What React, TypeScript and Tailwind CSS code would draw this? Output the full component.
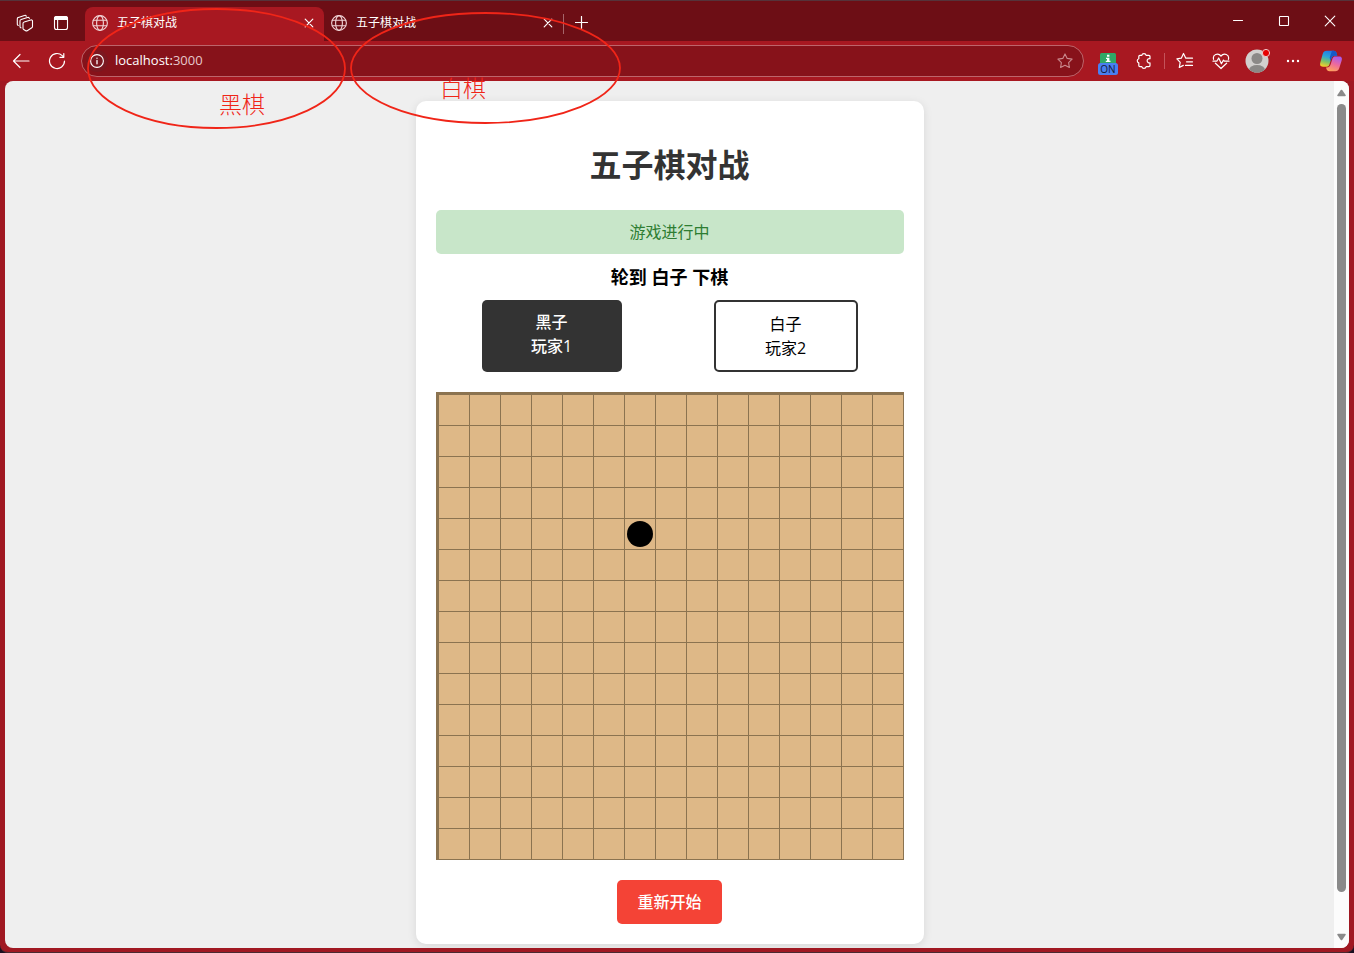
import React, { useState } from 'react';

type Stone = 'black' | 'white' | null;

const SIZE = 15;

const initialBoard = (): Stone[] => {
  const cells: Stone[] = Array(SIZE * SIZE).fill(null);
  cells[4 * SIZE + 6] = 'black';
  return cells;
};

const line = {
  fill: 'none',
  stroke: 'currentColor',
  strokeLinecap: 'round' as const,
  strokeLinejoin: 'round' as const,
};

function GlobeIcon() {
  return (
    <svg width="16" height="16" viewBox="0 0 16 16" className="shrink-0 text-[#f0d4d6]" {...line} strokeWidth="1.1">
      <circle cx="8" cy="8" r="7.4" />
      <ellipse cx="8" cy="8" rx="3.4" ry="7.4" />
      <path d="M1.3 5.3h13.4M1.3 10.7h13.4" />
    </svg>
  );
}

function CloseIcon() {
  return (
    <svg width="10" height="10" viewBox="0 0 10 10" {...line} strokeWidth="1.2">
      <path d="M1.2 1.2l7.6 7.6M8.8 1.2L1.2 8.8" />
    </svg>
  );
}

function WorkspacesIcon() {
  return (
    <svg width="18" height="18" viewBox="0 0 18 18" {...line} strokeWidth="1.1">
      <path d="M8.2 8l6.6-2c1.1-.3 1.700.2 1.700 1.100v5.300c0 .6-.2 1-.7 1.300l-4.600 3c-.5.3-1 .3-1.500 0l-2-1.200c-.5-.3-.7-.7-.7-1.300V9.400c0-.7.4-1.200 1.200-1.400z" />
      <path d="M4.900 13.800l-.5-.4c-.3-.2-.4-.5-.4-1V6.900c0-.7.4-1.200 1.100-1.400l6.400-2c.9-.3 1.600 0 1.800.9" />
      <path d="M2.200 11.500l-.5-.4c-.3-.2-.4-.5-.4-1V4.800c0-.7.4-1.200 1.100-1.400l6-2c.9-.3 1.600 0 1.900.8" />
    </svg>
  );
}

function TabActionsIcon() {
  return (
    <svg width="16" height="16" viewBox="0 0 16 16" {...line} strokeWidth="1.1">
      <rect x="1.5" y="1.5" width="13" height="13" rx="2" />
      <path d="M1.5 3.5c0-1.200.8-2 2-2h9c1.200 0 2 .8 2 2v1h-13z" fill="currentColor" />
      <path d="M4.6 5v9.5" />
    </svg>
  );
}

function BackIcon() {
  return (
    <svg width="18" height="18" viewBox="0 0 18 18" {...line} strokeWidth="1.2">
      <path d="M8 2.5L1.5 9 8 15.5M1.5 9h15.5" />
    </svg>
  );
}

function ReloadIcon() {
  return (
    <svg width="18" height="18" viewBox="0 0 18 18" {...line} strokeWidth="1.2">
      <path d="M16.5 9a7.5 7.5 0 1 1-2.3-5.4L15.8 5.2M15.8 1.5v3.8h-3.9" />
    </svg>
  );
}

function StarIcon() {
  return (
    <svg width="16" height="16" viewBox="0 0 16 16" className="text-[#c9898d]" {...line} strokeWidth="1.1">
      <path d="M8 .9l2.2 4.5 4.900.7-3.500 3.500.8 4.900L8 12.200l-4.400 2.300.8-4.900L.9 6.100l4.900-.7z" />
    </svg>
  );
}

function ExtensionIcon() {
  return (
    <svg width="22" height="28" viewBox="0 0 22 28" fill="none">
      <rect x="3" y="6" width="16" height="12" rx="1.5" fill="#2fa866" />
      <path d="M10 7.700h2.400v2H10zM9 10.700h3.400v3H13.500v1.300H8.800v-1.300H10v-1.700H9z" fill="#fff" />
      <rect x="1" y="16" width="20" height="12" rx="2.5" fill="#4a7ff0" />
      <text x="11" y="25.500" textAnchor="middle" fontSize="10" fill="#10183a" fontFamily="Open Sans, sans-serif">ON</text>
    </svg>
  );
}

function PuzzleIcon() {
  return (
    <svg width="18" height="18" viewBox="0 0 18 18" {...line} strokeWidth="1.2">
      <path d="M4.800 3.400h2a2.200 2.200 0 0 1 4.300 0h2.900c.6 0 1 .4 1 1v2.300a2.200 2.200 0 1 0 0 4.200v2.700c0 .6-.4 1-1 1h-2.900a2.200 2.200 0 0 1-4.300 0h-2c-.6 0-1-.4-1-1v-2.700a2.200 2.200 0 0 1 0-4.200V4.400c0-.6.4-1 1-1z" />
    </svg>
  );
}

function FavoritesIcon() {
  return (
    <svg width="18" height="18" viewBox="0 0 18 18" {...line} strokeWidth="1.2">
      <path d="M9.800 6.200L7.500 1.500 5.300 6.200.9 6.800l3.300 3.500-.9 5.200 4-2.100M9.800 6.200h6.700M10.500 9.800h6M9.500 13.400h7" />
    </svg>
  );
}

function HeartIcon() {
  return (
    <svg width="18" height="18" viewBox="0 0 18 18" {...line} strokeWidth="1.2">
      <path d="M1.600 7.300C.3 2.600 6 .4 9 4c3-3.600 8.700-1.400 7.400 3.300M3.400 11.200L9 16.500l5.600-5.300" />
      <path d="M1 9.200h3.800l1.900-3.200 2.700 5.800 2.100-3.700.9 1.100H17" />
    </svg>
  );
}

function AvatarIcon() {
  return (
    <svg width="26" height="26" viewBox="0 0 26 26">
      <defs>
        <clipPath id="face">
          <circle cx="13" cy="13" r="11.5" />
        </clipPath>
      </defs>
      <circle cx="13" cy="13" r="11.5" fill="#d2d0ce" />
      <g clipPath="url(#face)" fill="#8b8987">
        <circle cx="13" cy="10.5" r="5.5" />
        <ellipse cx="13" cy="22" rx="8" ry="5" />
      </g>
      <circle cx="22" cy="5" r="3.6" fill="#e60000" stroke="#f0c8ca" strokeWidth="1" />
    </svg>
  );
}

function CopilotIcon() {
  return (
    <svg width="24" height="24" viewBox="0 0 24 24">
      <defs>
        <linearGradient id="cpLeft" x1=".6" y1="0" x2=".3" y2="1">
          <stop offset="0" stopColor="#2178e6" />
          <stop offset=".4" stopColor="#2da6d8" />
          <stop offset=".7" stopColor="#7fc265" />
          <stop offset="1" stopColor="#f2cf2c" />
        </linearGradient>
        <linearGradient id="cpRight" x1=".7" y1="0" x2=".3" y2="1">
          <stop offset="0" stopColor="#a65af0" />
          <stop offset=".5" stopColor="#ee6a9c" />
          <stop offset="1" stopColor="#ffa45c" />
        </linearGradient>
      </defs>
      <path d="M7.800 1.800h7c1.600 0 2.300.9 2.700 2.300l.8 2.600h-2.500c-1.900 0-2.900.9-3.400 2.600l-2 6.200c-.5 1.500-1.400 2.200-2.900 2.200H3.900c-2.700 0-3.300-1.800-2.500-4.400l2.300-8.200c.6-2.200 1.900-3.300 4.100-3.300z" fill="url(#cpLeft)" />
      <path d="M13 1.800h1.800c1.600 0 2.300.9 2.700 2.300l.8 2.600h-2.500c-1.900 0-2.900.9-3.400 2.600l-.9 2.900-.8-3.600z" fill="#1758c7" />
      <path d="M16.200 22.200H10.500c-1.900 0-2.600-.9-3.100-2.500l-.4-1.200c2.500.2 3.900-.8 4.600-3l1.900-5.900c.5-1.500 1.400-2.100 2.900-2.100h3.700c2.700 0 3.300 1.700 2.500 4.300l-2.300 7.100c-.7 2.200-1.900 3.300-4.100 3.300z" fill="url(#cpRight)" />
    </svg>
  );
}

function Tab({ title, active }: { title: string; active?: boolean }) {
  return (
    <div className={`flex w-[239px] items-center self-stretch rounded-t-lg pb-0.5 pl-[7px] pr-2.5 ${active ? 'bg-[#a81821]' : ''}`}>
      <GlobeIcon />
      <a href="#" className="ml-[9px] flex-1 text-xs text-white">{title}</a>
      <button aria-label="关闭标签页">
        <CloseIcon />
      </button>
    </div>
  );
}

function ToolButton({ label, children }: { label: string; children: React.ReactNode }) {
  return (
    <button aria-label={label} className="flex h-8 w-9 shrink-0 items-center justify-center">
      {children}
    </button>
  );
}

function WindowButton({ label, d }: { label: string; d: string }) {
  return (
    <button aria-label={label} className="flex h-10 w-[46px] items-center justify-center">
      <svg width="12" height="12" viewBox="0 0 12 12" {...line} strokeWidth="1.1">
        <path d={d} />
      </svg>
    </button>
  );
}

function TitleBar() {
  return (
    <header className="flex h-[41px] items-center border-t border-[#55333a] bg-[#6d0e15] pl-[7px] pr-px pt-1.5">
      <div className="flex items-center pb-0.5">
        <ToolButton label="工作区"><WorkspacesIcon /></ToolButton>
        <ToolButton label="标签操作"><TabActionsIcon /></ToolButton>
      </div>
      <nav className="ml-1.5 flex items-center self-stretch">
        <Tab title="五子棋对战" active />
        <Tab title="五子棋对战" />
      </nav>
      <div className="h-5 w-px bg-[#a5656a]" />
      <div className="pb-0.5">
        <ToolButton label="新建标签页">
          <svg width="14" height="14" viewBox="0 0 14 14" {...line} strokeWidth="1.2">
            <path d="M6.5 .5v12M.5 6.5h12" />
          </svg>
        </ToolButton>
      </div>
      <div className="mb-1.5 ml-auto flex">
        <WindowButton label="最小化" d="M1.5 5.5h9" />
        <WindowButton label="最大化" d="M2 1.500h8q.5 0 .5.500v8q0 .5-.5.500H2q-.5 0-.5-.5V2q0-.5.500-.5z" />
        <WindowButton label="关闭" d="M1.2 1.2l9.6 9.6M10.8 1.2l-9.6 9.6" />
      </div>
    </header>
  );
}

function AddressBar() {
  return (
    <div className="flex h-10 items-center bg-[#a81821] pl-[3px] pr-[5px]">
      <ToolButton label="返回"><BackIcon /></ToolButton>
      <ToolButton label="刷新"><ReloadIcon /></ToolButton>
      <div className="mx-1.5 flex h-8 flex-1 items-center rounded-full border border-[#bd656b] bg-[#87121a] pl-1 pr-2.5">
        <button aria-label="查看站点信息" className="flex size-[22px] items-center justify-center rounded-full bg-[#7b1820]">
          <svg width="14" height="14" viewBox="0 0 14 14" {...line} strokeWidth="1.1">
            <circle cx="7" cy="7" r="6.4" />
            <path d="M7 6.5v3.3M7 4.2v.1" strokeWidth="1.3" />
          </svg>
        </button>
        <a href="#" className="ml-[7px] flex-1 text-[13px] text-white">
          localhost:<span className="text-[#e6c8ca]">3000</span>
        </a>
        <button aria-label="收藏此页"><StarIcon /></button>
      </div>
      <ToolButton label="扩展"><ExtensionIcon /></ToolButton>
      <ToolButton label="扩展管理"><PuzzleIcon /></ToolButton>
      <div className="mx-0.5 h-4 w-px bg-[#c4535a]" />
      <ToolButton label="收藏夹"><FavoritesIcon /></ToolButton>
      <ToolButton label="浏览器概要"><HeartIcon /></ToolButton>
      <ToolButton label="个人资料"><AvatarIcon /></ToolButton>
      <ToolButton label="更多">
        <svg width="14" height="4" viewBox="0 0 14 4" fill="currentColor">
          <circle cx="2" cy="2" r="1.2" />
          <circle cx="7" cy="2" r="1.2" />
          <circle cx="12" cy="2" r="1.2" />
        </svg>
      </ToolButton>
      <div className="ml-0.5">
        <ToolButton label="Copilot"><CopilotIcon /></ToolButton>
      </div>
    </div>
  );
}

function Board({ cells, onPlace }: { cells: Stone[]; onPlace: (i: number) => void }) {
  return (
    <div className="grid grid-cols-15 border-l-3 border-t-3 border-[#8b7350] bg-[#deb887]">
      {cells.map((stone, i) => (
        <button
          key={i}
          aria-label={`${Math.floor(i / SIZE) + 1}-${(i % SIZE) + 1}`}
          onClick={() => onPlace(i)}
          className="flex aspect-square items-center justify-center border-b border-r border-[#8b7350]"
        >
          {stone && (
            <span className={`size-[26px] rounded-full ${stone === 'black' ? 'bg-black' : 'bg-white'}`} />
          )}
        </button>
      ))}
    </div>
  );
}

function Game() {
  const [cells, setCells] = useState<Stone[]>(initialBoard);
  const [turn, setTurn] = useState<'black' | 'white'>('white');

  const handlePlace = (i: number) => {
    if (cells[i]) return;
    setCells(prev => prev.map((c, n) => (n === i ? turn : c)));
    setTurn(turn === 'black' ? 'white' : 'black');
  };

  const handleRestart = () => {
    setCells(Array(SIZE * SIZE).fill(null));
    setTurn('black');
  };

  return (
    <main className="w-[508px] rounded-[10px] bg-white p-5 text-center text-base text-black shadow-[0_2px_10px_rgba(0,0,0,0.1)]">
      <h1 className="mb-5 mt-5 pb-px text-[32px] font-bold leading-12 text-[#333]">五子棋对战</h1>
      <div className="rounded-[5px] bg-[#c8e6c9] p-2.5 text-[#2e7d32]">游戏进行中</div>
      <div className="my-2.5 text-lg font-bold leading-[26px]">
        轮到 {turn === 'black' ? '黑子' : '白子'} 下棋
      </div>
      <div className="mb-5 flex justify-around">
        <div className="w-[140px] rounded-[5px] bg-[#333] p-2.5 font-medium text-white">
          <div>黑子</div>
          <div>玩家1</div>
        </div>
        <div className="w-36 rounded-[5px] border-2 border-[#333] bg-white p-2.5">
          <div>白子</div>
          <div>玩家2</div>
        </div>
      </div>
      <Board cells={cells} onPlace={handlePlace} />
      <button onClick={handleRestart} className="mt-5 rounded-[5px] bg-[#f44336] px-5 py-2.5 font-medium text-white">
        重新开始
      </button>
    </main>
  );
}

function Scrollbar() {
  return (
    <div className="flex w-[15px] flex-col items-center bg-[#fcfcfc] pb-[7px] pt-2">
      <svg width="9" height="8" viewBox="0 0 10 8" fill="#8a8a8a">
        <path d="M4.200.8q.8-1 1.600 0l3.800 5.400q.5 1.300-.8 1.300H1.200Q-.1 7.500.4 6.200z" />
      </svg>
      <div className="mb-[41px] mt-[7px] w-[9px] flex-1 rounded-full bg-[#8a8a8a]" />
      <svg width="9" height="8" viewBox="0 0 10 8" fill="#8a8a8a">
        <path d="M4.200 7.200q.8 1 1.600 0l3.800-5.400Q10.100.5 8.800.5H1.200Q-.1.5.4 1.800z" />
      </svg>
    </div>
  );
}

// hand-drawn circles marking which tab plays which colour
function Annotations() {
  return (
    <div className="pointer-events-none absolute left-0 top-0 font-['Liberation_Serif','Noto_Sans_CJK_SC',serif] text-[23px] font-light leading-6 text-[#f02518]">
      <svg width="640" height="135" viewBox="0 0 640 135" fill="none" stroke="#f02518" strokeWidth="1.8">
        <ellipse cx="216.5" cy="68.5" rx="128.5" ry="59.5" />
        <ellipse cx="485.5" cy="68" rx="134.5" ry="55" />
      </svg>
      <span className="absolute left-[219px] top-[94px] whitespace-nowrap">黑棋</span>
      <span className="absolute left-[440px] top-[78px] whitespace-nowrap">白棋</span>
    </div>
  );
}

export default function App() {
  return (
    <div className="bg-[#1a1020] font-['Open_Sans','Noto_Sans_CJK_SC',sans-serif] text-white">
      <div className="relative flex min-h-screen flex-col rounded-b-lg border-b border-[#4a2a30] bg-[#a01822]">
        <TitleBar />
        <AddressBar />
        <div className="flex flex-1 px-[5px] pb-1">
          <div className="flex flex-1 overflow-hidden rounded-lg bg-[#efefef]">
            <div className="flex flex-1 items-start justify-center pb-1 pt-5">
              <Game />
            </div>
            <Scrollbar />
          </div>
        </div>
        <Annotations />
      </div>
    </div>
  );
}
